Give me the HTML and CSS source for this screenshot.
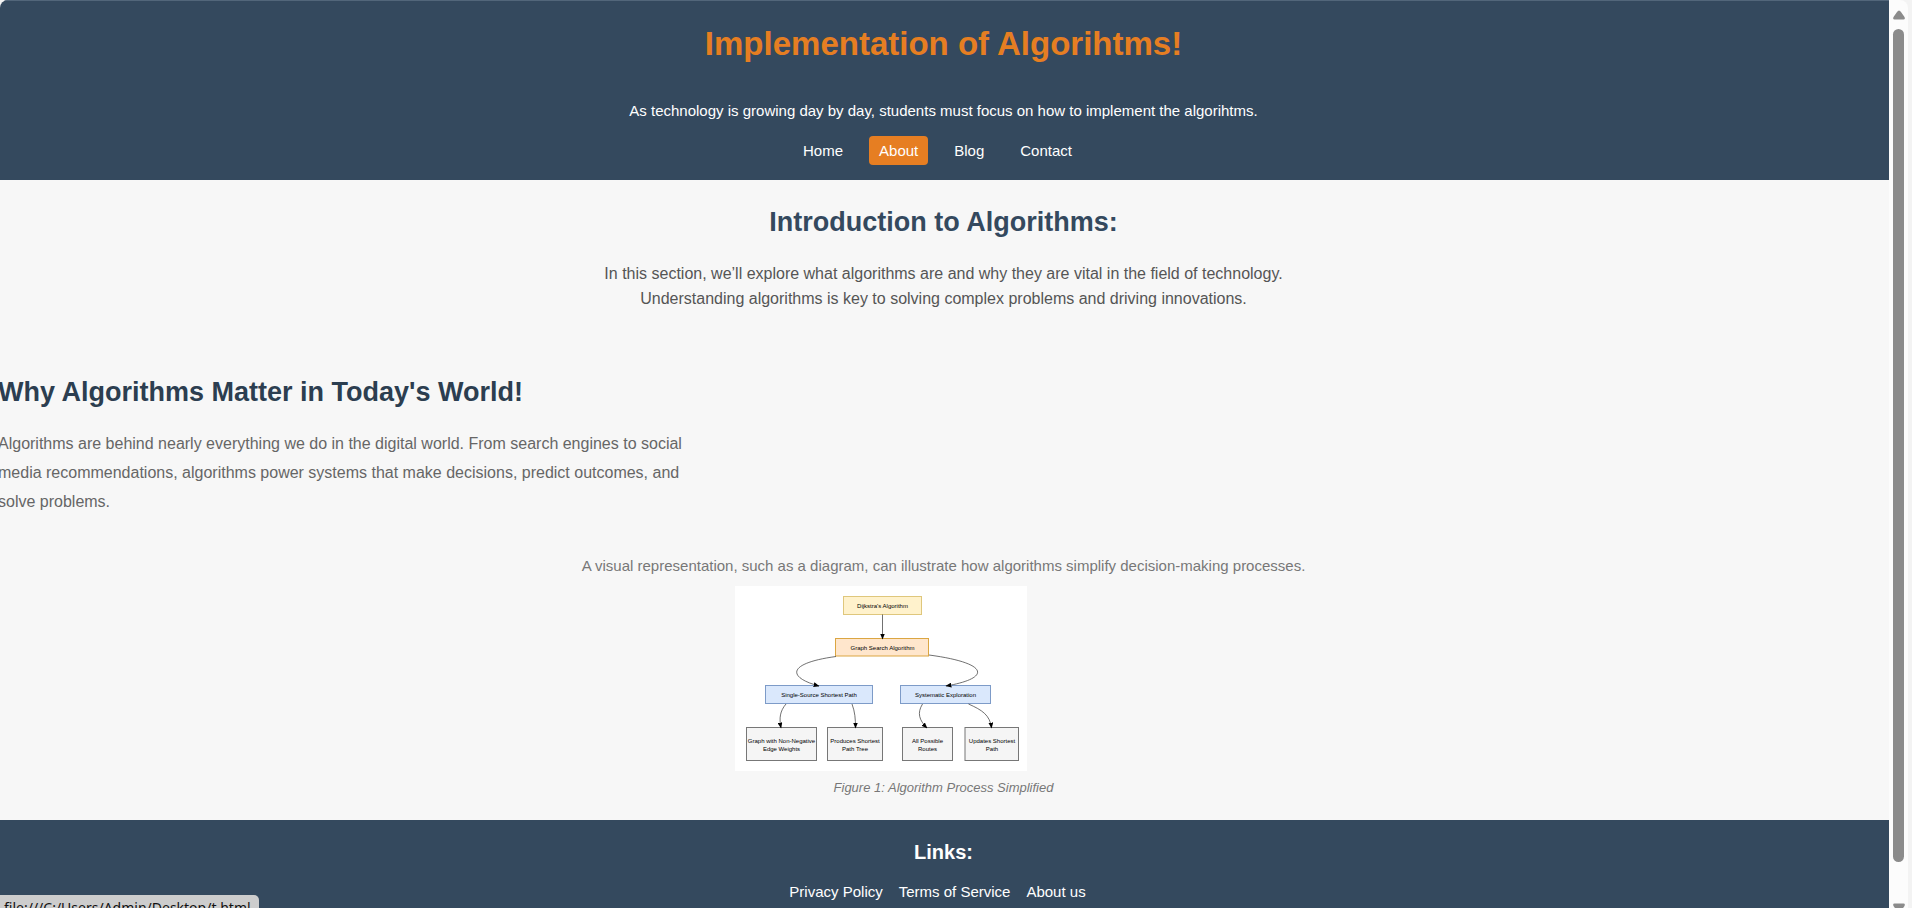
FILE: index.html
```html
<!DOCTYPE html>
<html lang="en">
<head>
<meta charset="utf-8">
<title>Implementation of Algorithms</title>
<link rel="stylesheet" href="styles.css">
</head>
<body>
<div class="window">
  <div class="page">
    <header class="site-header">
      <h1>Implementation of Algorihtms!</h1>
      <p class="tagline">As technology is growing day by day, students must focus on how to implement the algorihtms.</p>
      <nav>
        <ul class="nav-list">
          <li><a href="#home">Home</a></li>
          <li><a href="#about" class="active">About</a></li>
          <li><a href="#blog">Blog</a></li>
          <li><a href="#contact">Contact</a></li>
        </ul>
      </nav>
    </header>
    <main>
      <section class="intro">
        <h2>Introduction to Algorithms:</h2>
        <p>In this section, we’ll explore what algorithms are and why they are vital in the field of technology. Understanding algorithms is key to solving complex problems and driving innovations.</p>
      </section>
      <article class="why">
        <h2>Why Algorithms Matter in Today's World!</h2>
        <p>Algorithms are behind nearly everything we do in the digital world. From search engines to social media recommendations, algorithms power systems that make decisions, predict outcomes, and solve problems.</p>
      </article>
      <p class="lead-in">A visual representation, such as a diagram, can illustrate how algorithms simplify decision-making processes.</p>
      <figure>
        <svg class="diagram" viewBox="0 0 292 185" role="img" aria-label="Dijkstra's algorithm diagram">
          <defs>
            <marker id="arrow" viewBox="0 0 5 4" refX="4.5" refY="2" markerWidth="6" markerHeight="5" markerUnits="userSpaceOnUse" orient="auto"><path class="head" d="M0 0L5 2L0 4Z"/></marker>
          </defs>
          <rect width="292" height="185" fill="#fff"/>
          <rect class="yellow" x="108.500" y="10.500" width="78" height="18"/>
          <rect class="orange" x="100.500" y="52.500" width="93" height="17.500"/>
          <rect class="blue" x="30.500" y="99.500" width="107" height="18"/>
          <rect class="blue" x="165.500" y="99.500" width="90" height="18"/>
          <rect class="grey" x="11.500" y="141.500" width="70" height="33"/>
          <rect class="grey" x="92.500" y="141.500" width="55" height="33"/>
          <rect class="grey" x="167.500" y="141.500" width="50" height="33"/>
          <rect class="grey" x="230" y="141.500" width="53.500" height="33"/>
          <g class="edges">
            <path d="M147.500 28.500V53"/>
            <path d="M101 70.500C53 77 51 91 84 100"/>
            <path d="M194 69C254 77 257 92 211 100"/>
            <path d="M51 118C45 125 44 132 46 142"/>
            <path d="M117 118C120 126 120.500 133 120.500 142"/>
            <path d="M187.500 118C182 127 184 134 192 142"/>
            <path d="M233.500 118C247 124 255 129 256.500 142"/>
          </g>
          <g class="labels">
            <text x="147.500" y="22">Dijkstra's Algorithm</text>
            <text x="147.500" y="64">Graph Search Algorithm</text>
            <text x="84" y="111">Single-Source Shortest Path</text>
            <text x="210.500" y="111">Systematic Exploration</text>
            <text x="46.500" y="157">Graph with Non-Negative</text>
            <text x="46.500" y="165">Edge Weights</text>
            <text x="120" y="157">Produces Shortest</text>
            <text x="120" y="165">Path Tree</text>
            <text x="192.500" y="157">All Possible</text>
            <text x="192.500" y="165">Routes</text>
            <text x="257" y="157">Updates Shortest</text>
            <text x="257" y="165">Path</text>
          </g>
        </svg>
        <figcaption>Figure 1: Algorithm Process Simplified</figcaption>
      </figure>
    </main>
    <footer class="site-footer">
      <h3>Links:</h3>
      <ul class="footer-links">
        <li><a href="#privacy">Privacy Policy</a></li>
        <li><a href="#terms">Terms of Service</a></li>
        <li><a href="#about-us">About us</a></li>
      </ul>
    </footer>
  </div>
  <div class="scrollbar" aria-hidden="true">
    <svg class="arrow" viewBox="0 0 14 10"><path d="M7 0.500Q8 0.500 9 2L12.500 7Q13.500 9.500 11.500 9.500H2.500Q0.500 9.500 1.500 7L5 2Q6 0.500 7 0.500Z"/></svg>
    <div class="thumb"></div>
    <svg class="arrow" viewBox="0 0 14 10"><path d="M7 9.500Q8 9.500 9 8L12.500 3Q13.500 0.500 11.500 0.500H2.500Q0.500 0.500 1.500 3L5 8Q6 9.500 7 9.500Z"/></svg>
  </div>
</div>
<div class="status">file:///C:/Users/Admin/Desktop/t.html</div>
</body>
</html>
```
FILE: styles.css
```css
* { box-sizing: border-box; }
h1, h2, h3, p, ul, figure { margin: 0; padding: 0; }
body {
  margin: 0;
  height: 100vh;
  overflow: hidden;
  background: #f3f3f3;
  color: #555;
  font-family: "Liberation Sans", Arial, sans-serif;
  font-size: 16px;
}
.window {
  display: flex;
  height: 100vh;
  margin-right: 4px;
  overflow: hidden;
  background: #fcfcfc;
  border-radius: 8px 8px 0 0;
}
.page {
  flex: 1;
  margin-left: -2px;
  background: #f7f7f7;
}
a { color: #fff; text-decoration: none; }

.site-header {
  padding: 23px 0 15px;
  border-top: 1px solid #52667a;
  background: #34495e;
  color: #fff;
  text-align: center;
}
h1 {
  color: #e67e22;
  font-size: 33px;
  line-height: 40px;
}
.tagline {
  margin-top: 38px;
  font-size: 15px;
  line-height: 18px;
}
.nav-list, .footer-links {
  display: flex;
  justify-content: center;
  gap: 16px;
  padding-right: 12px;
  list-style: none;
  font-size: 15px;
}
.nav-list { margin-top: 16px; }
.nav-list a {
  display: block;
  padding: 6px 10px;
  border-radius: 4px;
  line-height: 17px;
}
.nav-list .active { background: #e67e22; }

main { padding: 26px 0 24px; }
h2 {
  font-size: 27px;
  line-height: 32px;
}
.intro { text-align: center; }
.intro h2 { color: #34495e; }
.intro p {
  max-width: 700px;
  margin: 23px auto 0;
  line-height: 25px;
}
.why { margin-top: 65px; }
.why h2 { color: #2c3e50; }
.why p {
  max-width: 700px;
  margin-top: 21px;
  color: #666;
  line-height: 29px;
}
.lead-in {
  margin-top: 41px;
  color: #777;
  font-size: 15px;
  line-height: 18px;
  text-align: center;
}
figure { margin-top: 11px; }
.diagram {
  display: block;
  width: 292px;
  margin-left: 39%;
}
figcaption {
  margin-top: 8px;
  color: #777;
  font-size: 13px;
  font-style: italic;
  line-height: 17px;
  text-align: center;
}
.edges path { fill: none; stroke: #333; stroke-width: 0.7; marker-end: url(#arrow); }
.head { fill: #000; }
.yellow { fill: #fff2cc; stroke: #dfc77c; }
.orange { fill: #ffe6cc; stroke: #dba642; }
.blue { fill: #dae8fc; stroke: #7d9bc8; }
.grey { fill: #f5f5f5; stroke: #777; }
.labels { fill: #000; font-size: 6px; text-anchor: middle; }

.site-footer {
  padding: 20px 0;
  background: #34495e;
  color: #fff;
  text-align: center;
}
h3 {
  font-size: 20px;
  line-height: 24px;
}
.footer-links {
  margin-top: 19px;
  line-height: 18px;
}

.scrollbar {
  display: flex;
  flex-direction: column;
  align-items: center;
  width: 19px;
  padding-top: 10px;
}
.arrow { flex: none; width: 14px; fill: #8b8b8b; }
.thumb {
  flex: none;
  width: 11px;
  height: calc(100vh - 75px);
  margin: 9px 0 41px;
  border-radius: 6px;
  background: #8b8b8b;
}
.status {
  position: fixed;
  left: 0;
  bottom: -10px;
  height: 23px;
  padding: 0 8px 0 4px;
  border-radius: 0 5px 0 0;
  background: #cdcdcd;
  color: #111;
  font-family: "Noto Sans", "Open Sans", sans-serif;
  font-size: 14px;
  line-height: 26px;
}
```
